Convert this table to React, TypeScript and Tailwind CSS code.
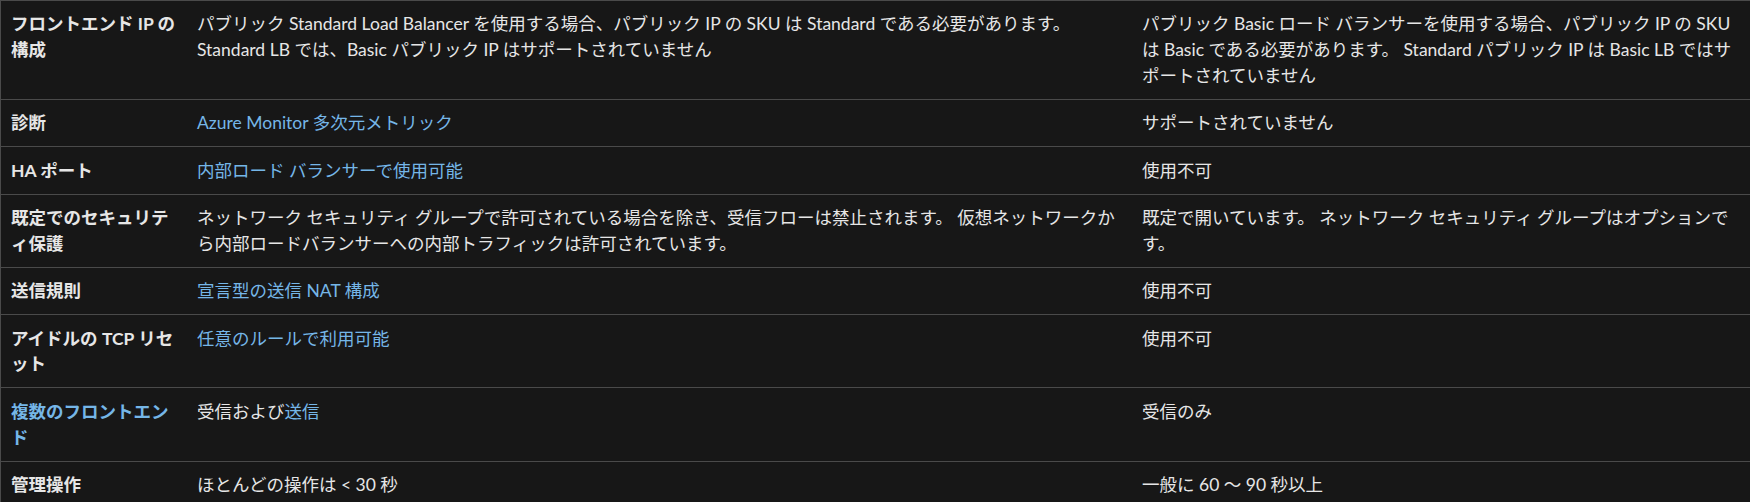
import React from 'react'

type Part = { text: string; link?: boolean }
type Row = {
  label: string
  labelLink?: boolean
  standard: Part[]
  basic: string
}

const rows: Row[] = [
  {
    label: 'フロントエンド IP の構成',
    standard: [
      {
        text: 'パブリック Standard Load Balancer を使用する場合、パブリック IP の SKU は Standard である必要があります。 Standard LB では、Basic パブリック IP はサポートされていません',
      },
    ],
    basic:
      'パブリック Basic ロード バランサーを使用する場合、パブリック IP の SKU は Basic である必要があります。 Standard パブリック IP は Basic LB ではサポートされていません',
  },
  {
    label: '診断',
    standard: [{ text: 'Azure Monitor 多次元メトリック', link: true }],
    basic: 'サポートされていません',
  },
  {
    label: 'HA ポート',
    standard: [{ text: '内部ロード バランサーで使用可能', link: true }],
    basic: '使用不可',
  },
  {
    label: '既定でのセキュリティ保護',
    standard: [
      {
        text: 'ネットワーク セキュリティ グループで許可されている場合を除き、受信フローは禁止されます。 仮想ネットワークから内部ロードバランサーへの内部トラフィックは許可されています。',
      },
    ],
    basic: '既定で開いています。 ネットワーク セキュリティ グループはオプションです。',
  },
  {
    label: '送信規則',
    standard: [{ text: '宣言型の送信 NAT 構成', link: true }],
    basic: '使用不可',
  },
  {
    label: 'アイドルの TCP リセット',
    standard: [{ text: '任意のルールで利用可能', link: true }],
    basic: '使用不可',
  },
  {
    label: '複数のフロントエンド',
    labelLink: true,
    standard: [{ text: '受信および' }, { text: '送信', link: true }],
    basic: '受信のみ',
  },
  {
    label: '管理操作',
    standard: [{ text: 'ほとんどの操作は < 30 秒' }],
    basic: '一般に 60 ～ 90 秒以上',
  },
]

const cell = 'pt-[10.4px] pb-[10.2px] pl-[10px]'

export default function App() {
  return (
    <div className="w-[1750px] h-[502px] overflow-hidden bg-[#171717] font-['Lato','Noto_Sans_CJK_JP',sans-serif] text-[17.5px] leading-[25.8px] text-[#e6e6e6]">
      <div className="w-[1750px] border-l border-t border-[#4a4a4a]">
        {rows.map((r) => (
          <div key={r.label} className="grid grid-cols-[186px_945px_618px] border-b border-[#4a4a4a]">
            <div className={`${cell} pr-[7px] font-bold ${r.labelLink ? 'text-[#75b6e7]' : 'text-[#e6e6e6]'}`}>
              {r.label}
            </div>
            <div className={`${cell} pr-[8px]`}>
              {r.standard.map((p, i) => (
                <span key={i} className={p.link ? 'text-[#75b6e7]' : ''}>
                  {p.text}
                </span>
              ))}
            </div>
            <div className={`${cell} pr-[14px]`}>{r.basic}</div>
          </div>
        ))}
      </div>
    </div>
  )
}
